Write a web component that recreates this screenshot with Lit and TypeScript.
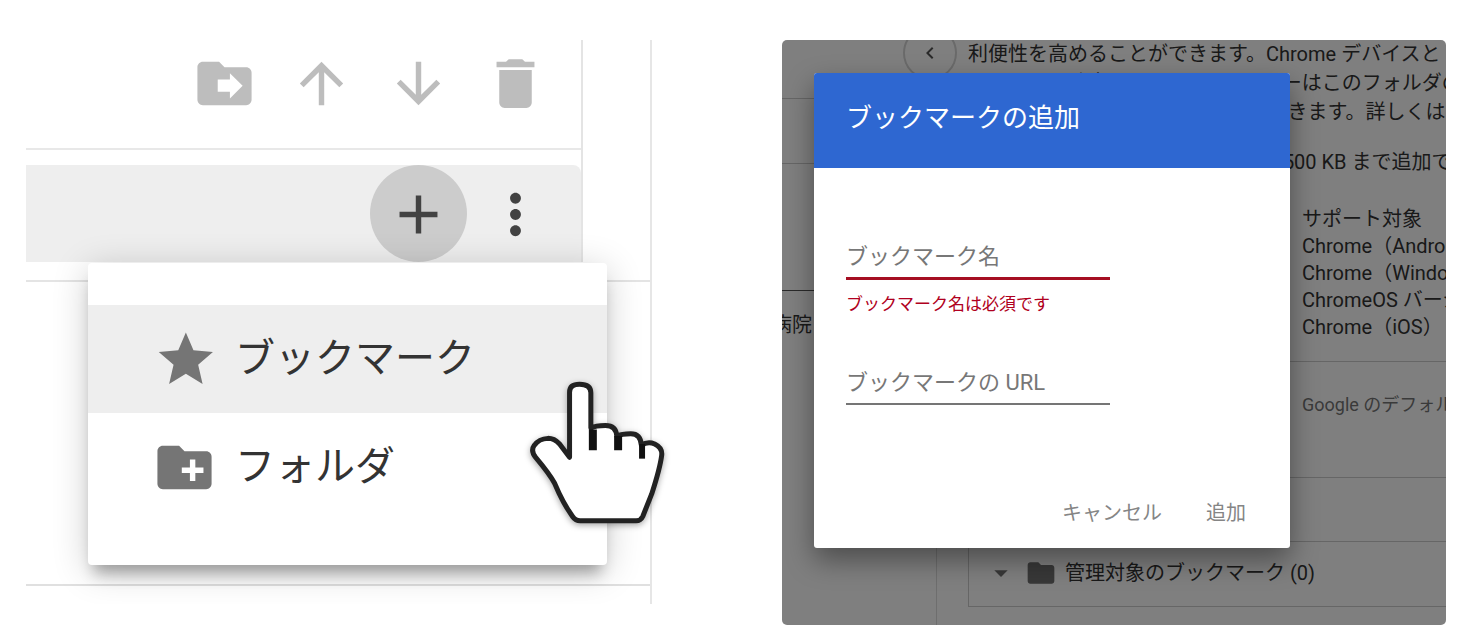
import { LitElement, html, css, svg } from "lit";
import { customElement } from "lit/decorators.js";

const icon = (d: string) => html`<svg class="icon" viewBox="0 0 24 24" aria-hidden="true">${svg`<path d=${d} fill="currentColor" fill-rule="evenodd"/>`}</svg>`;

const ICONS = {
  moveFolder:
    "M20 6h-8l-2-2H4C2.900 4 2 4.900 2 6v12c0 1.100.9 2 2 2h16c1.100 0 2-.9 2-2V8c0-1.100-.9-2-2-2zM14 17.500v-2.500h-4.500v-4.500H14V8.200l4.700 4.600z",
  up: "M4 12l1.410 1.410L11 7.830V20h2V7.830l5.580 5.590L20 12l-8-8-8 8z",
  down: "M20 12l-1.410-1.410L13 16.170V4h-2v12.170l-5.580-5.590L4 12l8 8 8-8z",
  trash: "M6 19c0 1.100.9 2 2 2h8c1.100 0 2-.9 2-2V7H6v12zM19 4h-3.500l-1-1h-5l-1 1H5v2h14V4z",
  plus: "M19 13h-6v6h-2v-6H5v-2h6V5h2v6h6v2z",
  more:
    "M12 8c1.100 0 2-.9 2-2s-.9-2-2-2-2 .9-2 2 .9 2 2 2zm0 2c-1.100 0-2 .9-2 2s.9 2 2 2 2-.9 2-2-.9-2-2-2zm0 6c-1.100 0-2 .9-2 2s.9 2 2 2 2-.9 2-2-.9-2-2-2z",
  star: "M12.500 17.270L18.680 21l-1.640-7.030L22.500 9.240l-7.190-.61L12.500 2 9.690 8.630 2.500 9.240l5.460 4.730L6.320 21z",
  newFolder:
    "M20 6h-8l-2-2H4c-1.110 0-1.990.890-1.990 2L2 18c0 1.110.89 2 2 2h16c1.110 0 2-.89 2-2V8c0-1.110-.89-2-2-2zm-1 8h-3v3h-2v-3h-3v-2h3V9h2v3h3v2z",
  folder: "M10 4H4c-1.100 0-2 .9-2 2v12c0 1.100.9 2 2 2h16c1.100 0 2-.9 2-2V8c0-1.100-.9-2-2-2h-8l-2-2z",
  caret: "M7 10l5 5 5-5z",
  back: "M15.410 7.410L14 6l-6 6 6 6 1.410-1.410L10.830 12z",
};

@customElement("bookmark-tree")
class BookmarkTree extends LitElement {
  static styles = css`
    :host {
      display: block;
      position: relative;
      overflow: hidden;
      padding-right: 38px;
      color: #424242;
    }
    * { box-sizing: border-box; }
    button {
      border: 0;
      margin: 0;
      padding: 0;
      background: none;
      color: inherit;
      font: inherit;
    }
    .icon { display: block; width: 65px; height: 65px; flex: none; }
    .stage {
      border-right: 2px solid #e6e6e6;
      padding-bottom: 18px;
    }
    .tree {
      margin-right: 67px;
      border-right: 2px solid #e4e4e4;
    }
    .toolbar {
      display: flex;
      justify-content: flex-end;
      padding: 0 17px 22px 0;
      border-bottom: 2px solid #e8e8e8;
      color: #bdbdbd;
    }
    .tool, .action {
      width: 97px;
      display: flex;
      align-items: center;
      justify-content: center;
    }
    .tool { height: 86px; }
    .row {
      position: relative;
      display: flex;
      justify-content: flex-end;
      margin-top: 15px;
      padding-right: 17px;
      background: #eee;
      border-top-right-radius: 8px;
    }
    .action { height: 97px; padding-top: 2px; border-radius: 50%; }
    .active { background: #ccc; }
    .rest {
      height: 306px;
      margin-top: 18px;
      border-top: 2px solid #e4e4e4;
      border-bottom: 2px solid #e0e0e0;
    }
    .menu {
      position: absolute;
      top: 100%;
      left: 62px;
      right: -26px;
      margin-top: 1px;
      padding: 42px 0 44px;
      background: #fff;
      border-radius: 4px;
      box-shadow: 0 14px 14px -6px rgba(0, 0, 0, 0.3), 0 6px 36px rgba(0, 0, 0, 0.2);
    }
    .item {
      display: flex;
      align-items: center;
      gap: 18px;
      width: 100%;
      height: 108px;
      padding-left: 64px;
      font-size: 40px;
      line-height: 54px;
      color: #333;
      text-align: left;
    }
    .item .icon { color: #757575; }
    .hover { background: #eee; }
    .cursor {
      position: absolute;
      top: 340px;
      left: 502px;
      width: 138px;
      height: 145px;
      overflow: visible;
      filter: drop-shadow(0 2px 3px rgba(0, 0, 0, 0.35));
    }
  `;

  render() {
    return html`
      <div class="stage">
        <div class="tree">
          <div class="toolbar">
            <button class="tool" aria-label="移動">${icon(ICONS.moveFolder)}</button>
            <button class="tool" aria-label="上へ">${icon(ICONS.up)}</button>
            <button class="tool" aria-label="下へ">${icon(ICONS.down)}</button>
            <button class="tool" aria-label="削除">${icon(ICONS.trash)}</button>
          </div>
          <div class="row">
            <button class="action active" aria-label="追加">${icon(ICONS.plus)}</button>
            <button class="action" aria-label="その他">${icon(ICONS.more)}</button>
            <div class="menu" role="menu">
              <button class="item hover" role="menuitem">${icon(ICONS.star)}<span>ブックマーク</span></button>
              <button class="item" role="menuitem">${icon(ICONS.newFolder)}<span>フォルダ</span></button>
            </div>
          </div>
        </div>
        <div class="rest"></div>
      </div>
      <svg class="cursor" viewBox="385 120 415 435" aria-hidden="true">
        <path
          d="M510 352V156Q510 132 540 132Q574 132 574 158V264Q588 256 618 256Q650 256 652 288Q666 281 694 281Q724 281 726 316Q745 303 766 312Q790 324 787 346Q782 385 757 462L730 530Q724 543 710 543H542Q528 543 519 530Q490 490 465 430Q450 402 408 352Q392 332 404 316Q418 296 445 295Q464 295 480 312Z"
          fill="#fff" stroke="#222" stroke-width="15" stroke-linejoin="round"/>
        <path d="M580 268V331M656 288V331" stroke="#111" stroke-width="24" fill="none"/>
        <path d="M728 312V356" stroke="#111" stroke-width="18" fill="none"/>
      </svg>
    `;
  }
}

@customElement("add-bookmark-dialog")
class AddBookmarkDialog extends LitElement {
  static styles = css`
    :host {
      display: block;
      background: #fff;
      border-radius: 3px;
      overflow: hidden;
      box-shadow: 0 12px 28px rgba(0, 0, 0, 0.4);
    }
    * { box-sizing: border-box; }
    .title {
      margin: 0;
      padding: 28px 32px 32px;
      background: #2e67d1;
      color: #fff;
      font-size: 26px;
      line-height: 35px;
      font-weight: 400;
    }
    .body { padding: 69px 32px 0; }
    .field {
      display: grid;
      width: 264px;
      border-bottom: 2px solid #757575;
    }
    .field > * { grid-area: 1 / 1; }
    .invalid { border-bottom: 3px solid #a50e22; }
    .label {
      color: #777;
      font-size: 22px;
      line-height: 40px;
      pointer-events: none;
    }
    .input {
      width: 100%;
      height: 40px;
      padding: 0;
      border: 0;
      outline: 0;
      background: none;
      font: inherit;
      font-size: 22px;
    }
    .error {
      margin: 11px 0 46px;
      color: #b00020;
      font-size: 17px;
      line-height: 26px;
    }
    .actions {
      display: flex;
      justify-content: flex-end;
      gap: 12px;
      padding: 88px 28px 15px;
    }
    .button {
      height: 40px;
      margin: 0;
      padding: 0 16px;
      border: 0;
      background: none;
      color: #858585;
      font: inherit;
      font-size: 20px;
    }
  `;

  render() {
    return html`
      <h2 class="title">ブックマークの追加</h2>
      <div class="body">
        <div class="field invalid">
          <input class="input" id="name" type="text" required aria-invalid="true" aria-describedby="name-error" />
          <label class="label" for="name">ブックマーク名</label>
        </div>
        <p class="error" id="name-error">ブックマーク名は必須です</p>
        <div class="field">
          <input class="input" id="url" type="text" />
          <label class="label" for="url">ブックマークの URL</label>
        </div>
      </div>
      <div class="actions">
        <button class="button">キャンセル</button>
        <button class="button">追加</button>
      </div>
    `;
  }
}

@customElement("policy-page")
class PolicyPage extends LitElement {
  static styles = css`
    :host {
      display: flex;
      position: relative;
      overflow: hidden;
      border-radius: 5px;
      background: #fff;
      color: #333;
      font-size: 20px;
      line-height: 27px;
      white-space: nowrap;
    }
    * { box-sizing: border-box; }
    .icon { display: block; width: 32px; height: 32px; flex: none; }
    .side {
      flex: none;
      width: 155px;
      border-right: 1px solid #ddd;
    }
    .cell { height: 59px; border-bottom: 1px solid #ccc; }
    .second { height: 65px; }
    .third { height: 127px; border-bottom: 1px solid #555; }
    .unit {
      display: flex;
      justify-content: flex-end;
      width: 30px;
      margin-top: 21px;
      overflow: hidden;
    }
    .main {
      flex: 1;
      min-width: 0;
      padding: 0 0 18px 31px;
    }
    .line { margin: 0; line-height: 29px; }
    .limit { margin-top: 21px; }
    .support {
      margin: 29px 0 20px 334px;
      padding: 0;
      list-style: none;
    }
    .source {
      height: 117px;
      padding: 29px 0 0 334px;
      border: 1px solid #ccc;
      border-width: 1px 0;
      color: #757575;
      font-size: 18px;
    }
    .folder {
      display: flex;
      align-items: center;
      gap: 8px;
      height: 66px;
      margin-top: 63px;
      padding: 0 0 2px 16px;
      border: 1px solid #ccc;
      border-right: 0;
    }
    .folder .icon { color: #707070; }
    .collapse {
      position: absolute;
      top: -14px;
      left: 121px;
      width: 54px;
      height: 54px;
      display: flex;
      align-items: center;
      justify-content: center;
      padding: 0;
      border: 2px solid #d4d4d4;
      border-radius: 50%;
      background: #fff;
      color: #555;
    }
    .collapse .icon { width: 24px; height: 24px; }
    .scrim {
      position: absolute;
      inset: 0;
      background: rgba(0, 0, 0, 0.5);
    }
    .dialog {
      position: absolute;
      top: 33px;
      left: 32px;
      width: 476px;
    }
  `;

  render() {
    return html`
      <div class="side">
        <div class="cell"></div>
        <div class="cell second"></div>
        <div class="cell third"></div>
        <div class="unit"><span>病院</span></div>
      </div>
      <div class="main">
        <p class="line">利便性を高めることができます。Chrome デバイスと Chrome ブラウザ</p>
        <p class="line">のバーに一覧表示します。1 ユーザーはこのフォルダの内容を変更できません</p>
        <p class="line">が、バーの表示と非表示の切替ができます。詳しくは、ヘルプをご覧ください</p>
        <p class="line limit">管理対象の ブックマークは 最大で 500 KB まで追加できます</p>
        <ul class="support">
          <li>サポート対象</li>
          <li>Chrome（Android）</li>
          <li>Chrome（Windows）</li>
          <li>ChromeOS バージョン</li>
          <li>Chrome（iOS）</li>
        </ul>
        <div class="source">Google のデフォルト</div>
        <div class="folder">
          ${icon(ICONS.caret)}
          ${icon(ICONS.folder)}
          <span>管理対象のブックマーク (0)</span>
        </div>
      </div>
      <button class="collapse" aria-label="戻る">${icon(ICONS.back)}</button>
      <div class="scrim"></div>
      <add-bookmark-dialog class="dialog" role="dialog"></add-bookmark-dialog>
    `;
  }
}

@customElement("app-root")
class AppRoot extends LitElement {
  static styles = css`
    :host {
      display: grid;
      grid-template-columns: minmax(0, 1fr) minmax(0, 1fr);
      align-items: start;
      gap: 92px;
      padding: 40px 26px 14px;
      background: #fff;
      font-family: Roboto, "Noto Sans CJK JP", sans-serif;
    }
  `;

  render() {
    return html`<bookmark-tree></bookmark-tree><policy-page></policy-page>`;
  }
}
